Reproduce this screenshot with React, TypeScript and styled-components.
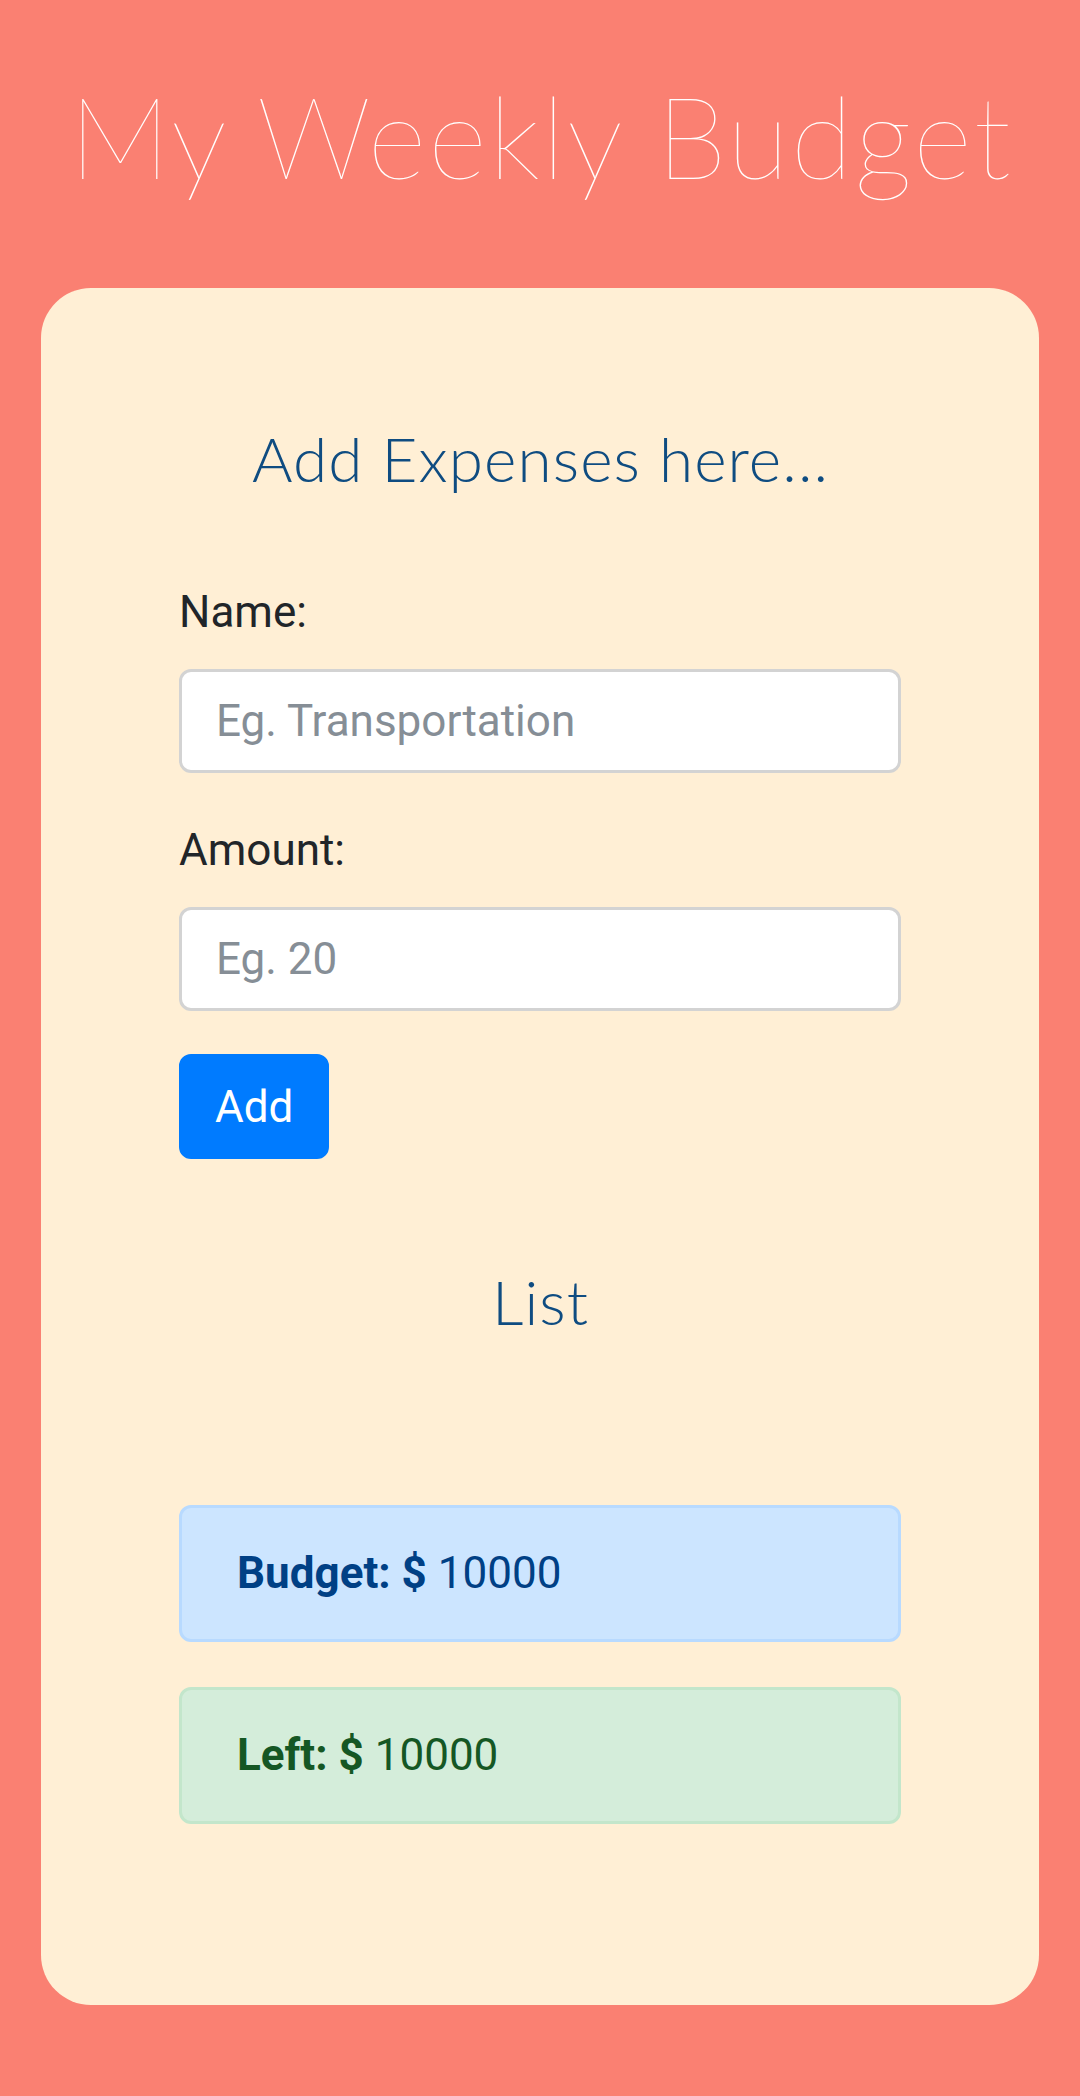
import React from "react";
import styled, { createGlobalStyle } from "styled-components";

const GlobalStyle = createGlobalStyle`
  html, body {
    margin: 0;
    padding: 0;
    background: #fa8072;
  }
  * { box-sizing: border-box; }
  input::placeholder { color: #868e96; opacity: 1; }
`;

const Page = styled.div`
  display: flex;
  flex-direction: column;
  align-items: center;
  padding: 66px 0 91px;
  background: #fa8072;
`;

const Title = styled.h1`
  margin: 0;
  font-family: Lato, "Liberation Sans", sans-serif;
  font-weight: 100;
  font-size: 114px;
  line-height: 137px;
  color: #ffffff;
  text-align: center;
  letter-spacing: 1.8px;
  padding-left: 1.8px;
`;

const Card = styled.main`
  margin-top: 85px;
  width: 998px;
  background: #ffefd5;
  border-radius: 50px;
  padding: 134px 138px 181px;
  display: flex;
  flex-direction: column;
`;

const SectionHeading = styled.h2<{ $gap?: number }>`
  margin: ${(p) => p.$gap ?? 0}px 0 0;
  font-family: Lato, "Liberation Sans", sans-serif;
  font-weight: 300;
  font-size: 62px;
  line-height: 73px;
  color: #0f4c81;
  text-align: center;
  letter-spacing: 1.1px;
  padding-left: 1.1px;
`;

const Field = styled.div<{ $gap: number }>`
  display: flex;
  flex-direction: column;
  margin-top: ${(p) => p.$gap}px;
`;

const Label = styled.label`
  font-family: Roboto, "Liberation Sans", sans-serif;
  font-size: 44px;
  line-height: 66px;
  color: #212529;
  margin-bottom: 24px;
`;

const TextInput = styled.input`
  width: 100%;
  height: 104px;
  padding: 0 34px;
  font-family: Roboto, "Liberation Sans", sans-serif;
  font-size: 44px;
  color: #495057;
  background: #ffffff;
  border: 3px solid #d3d3d3;
  border-radius: 12px;
  outline: none;
`;

const AddButton = styled.button`
  align-self: flex-start;
  margin-top: 43px;
  height: 105px;
  padding: 0 33px;
  font-family: Roboto, "Liberation Sans", sans-serif;
  font-size: 44px;
  line-height: 66px;
  color: #ffffff;
  background: #007bff;
  border: 3px solid #007bff;
  border-radius: 12px;
`;

const Alert = styled.div<{ $tone: "primary" | "success"; $gap: number }>`
  margin-top: ${(p) => p.$gap}px;
  padding: 32px 55px 33px;
  font-family: Roboto, "Liberation Sans", sans-serif;
  font-size: 44px;
  line-height: 66px;
  border-radius: 12px;
  border: 3px solid ${(p) => (p.$tone === "primary" ? "#b8daff" : "#c3e6cb")};
  background: ${(p) => (p.$tone === "primary" ? "#cce5ff" : "#d4edda")};
  color: ${(p) => (p.$tone === "primary" ? "#004085" : "#155724")};

  strong {
    font-weight: 700;
  }
`;

export default function App() {
  return (
    <>
      <GlobalStyle />
      <Page>
        <Title>My Weekly Budget</Title>
        <Card>
          <SectionHeading>Add Expenses here...</SectionHeading>
          <Field $gap={84}>
            <Label htmlFor="name">Name:</Label>
            <TextInput id="name" type="text" placeholder="Eg. Transportation" />
          </Field>
          <Field $gap={44}>
            <Label htmlFor="amount">Amount:</Label>
            <TextInput id="amount" type="text" placeholder="Eg. 20" />
          </Field>
          <AddButton type="button">Add</AddButton>
          <SectionHeading $gap={106}>List</SectionHeading>
          <Alert $tone="primary" $gap={167}>
            <strong>Budget: $</strong> 10000
          </Alert>
          <Alert $tone="success" $gap={45}>
            <strong>Left: $</strong> 10000
          </Alert>
        </Card>
      </Page>
    </>
  );
}
